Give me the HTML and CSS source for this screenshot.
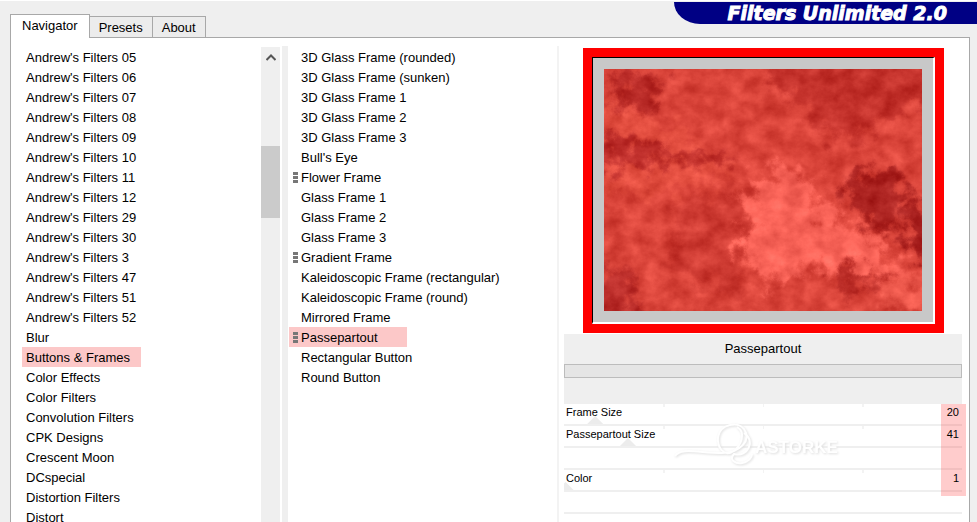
FILE: index.html
```
<!DOCTYPE html>
<html lang="en">
<head>
    <meta charset="UTF-8">
    <meta name="viewport" content="width=device-width, initial-scale=1.0">
    <title>Filters Unlimited 2.0</title>
    <link rel="stylesheet" href="styles.css">
</head>
<body>
    <header class="topbar">
        <div class="tabs" role="tablist">
            <button class="tab active" role="tab" aria-selected="true">Navigator</button>
            <button class="tab" role="tab" aria-selected="false">Presets</button>
            <button class="tab" role="tab" aria-selected="false">About</button>
        </div>
        <h1 class="brand">Filters Unlimited 2.0</h1>
    </header>

    <main class="panel">
        <section class="categories">
            <ul class="list">
                <li><button class="item">Andrew's Filters 05</button></li>
                <li><button class="item">Andrew's Filters 06</button></li>
                <li><button class="item">Andrew's Filters 07</button></li>
                <li><button class="item">Andrew's Filters 08</button></li>
                <li><button class="item">Andrew's Filters 09</button></li>
                <li><button class="item">Andrew's Filters 10</button></li>
                <li><button class="item">Andrew's Filters 11</button></li>
                <li><button class="item">Andrew's Filters 12</button></li>
                <li><button class="item">Andrew's Filters 29</button></li>
                <li><button class="item">Andrew's Filters 30</button></li>
                <li><button class="item">Andrew's Filters 3</button></li>
                <li><button class="item">Andrew's Filters 47</button></li>
                <li><button class="item">Andrew's Filters 51</button></li>
                <li><button class="item">Andrew's Filters 52</button></li>
                <li><button class="item">Blur</button></li>
                <li><button class="item selected">Buttons &amp; Frames</button></li>
                <li><button class="item">Color Effects</button></li>
                <li><button class="item">Color Filters</button></li>
                <li><button class="item">Convolution Filters</button></li>
                <li><button class="item">CPK Designs</button></li>
                <li><button class="item">Crescent Moon</button></li>
                <li><button class="item">DCspecial</button></li>
                <li><button class="item">Distortion Filters</button></li>
                <li><button class="item">Distort</button></li>
            </ul>
            <div class="scrollbar">
                <button class="scroll-up" aria-label="Scroll up">
                    <svg width="10" height="8" viewBox="0 0 10 8"><path d="M0.500 7L5 2.500L9.500 7" fill="none" stroke="#555" stroke-width="2"/></svg>
                </button>
                <div class="scroll-thumb"></div>
            </div>
        </section>

        <div class="divider"></div>

        <section class="filters">
            <ul class="list">
                <li><button class="item">3D Glass Frame (rounded)</button></li>
                <li><button class="item">3D Glass Frame (sunken)</button></li>
                <li><button class="item">3D Glass Frame 1</button></li>
                <li><button class="item">3D Glass Frame 2</button></li>
                <li><button class="item">3D Glass Frame 3</button></li>
                <li><button class="item">Bull's Eye</button></li>
                <li><button class="item marked">Flower Frame</button></li>
                <li><button class="item">Glass Frame 1</button></li>
                <li><button class="item">Glass Frame 2</button></li>
                <li><button class="item">Glass Frame 3</button></li>
                <li><button class="item marked">Gradient Frame</button></li>
                <li><button class="item">Kaleidoscopic Frame (rectangular)</button></li>
                <li><button class="item">Kaleidoscopic Frame (round)</button></li>
                <li><button class="item">Mirrored Frame</button></li>
                <li><button class="item marked selected">Passepartout</button></li>
                <li><button class="item">Rectangular Button</button></li>
                <li><button class="item">Round Button</button></li>
            </ul>
        </section>

        <section class="detail">
            <div class="preview">
                <div class="mat">
                    <svg class="texture" viewBox="0 0 318 242" preserveAspectRatio="none">
                        <defs>
                            <filter id="rust" x="-60" y="-60" width="440" height="360" filterUnits="userSpaceOnUse" color-interpolation-filters="sRGB">
                                <feTurbulence type="fractalNoise" baseFrequency="0.06" numOctaves="5" seed="8" result="warp"/>
                                <feGaussianBlur in="SourceGraphic" stdDeviation="4" result="soft"/>
                                <feDisplacementMap in="soft" in2="warp" scale="50" xChannelSelector="R" yChannelSelector="G" result="shapes"/>
                                <feTurbulence type="fractalNoise" baseFrequency="0.05 0.06" numOctaves="6" seed="14"/>
                                <feColorMatrix values="0.26 0 0 0 0.03  0.24 0 0 0 0.04  0.22 0 0 0 0.06  0 0 0 0 1" result="grain"/>
                                <feComposite in="shapes" in2="grain" operator="arithmetic" k1="0" k2="1" k3="1" k4="-0.165"/>
                            </filter>
                        </defs>
                        <g filter="url(#rust)">
                            <rect x="-60" y="-60" width="440" height="360" fill="#da4538"/>
                            <path d="M-20 30L80 60L130 110L60 120L-20 130Z" fill="#e5503f"/>
                            <path d="M10 5L60 8L50 40L12 38Z" fill="#b82a24"/>
                            <path d="M160 -20L340 -20L330 30L240 75L170 20Z" fill="#c5332a"/>
                            <path d="M-20 68L35 70L60 85L130 80L120 92L50 96L-20 98Z" fill="#c0302a"/>
                            <path d="M80 130L140 120L138 230L60 200Z" fill="#cf3c31"/>
                            <path d="M150 105L200 100L222 145L270 165L300 205L250 205L210 195L165 215L140 190L142 130Z" fill="#fa6557"/>
                            <path d="M245 100L290 105L300 135L285 170L255 140L235 130Z" fill="#ad241f"/>
                            <path d="M300 140L340 130L340 200L305 190Z" fill="#a8201c"/>
                            <path d="M235 200L275 205L255 225L235 220Z" fill="#bc2e26"/>
                            <path d="M275 205L340 215L340 245L280 235Z" fill="#ee5a4b"/>
                            <path d="M-20 195L30 205L35 260L-20 260Z" fill="#be302a"/>
                        </g>
                    </svg>
                </div>
            </div>

            <div class="info">
                <h2 class="filter-name">Passepartout</h2>
                <div class="progress"></div>
            </div>

            <div class="params">
                <div class="param ticks">
                    <label for="frameSize">Frame Size</label>
                    <output for="frameSize">20</output>
                    <input type="range" id="frameSize" min="0" max="255" value="20">
                </div>
                <div class="param ticks">
                    <label for="matSize">Passepartout Size</label>
                    <output for="matSize">41</output>
                    <input type="range" id="matSize" min="0" max="255" value="41">
                </div>
                <div class="param"></div>
                <div class="param ticks">
                    <label for="color">Color</label>
                    <output for="color">1</output>
                    <input type="range" id="color" min="0" max="255" value="1">
                </div>
                <div class="param"></div>
                <div class="highlight"></div>
                <svg class="watermark" width="180" height="48" viewBox="0 0 180 48">
                    <g fill="none" stroke="#fff" stroke-width="2">
                        <path d="M3 34C8 25 28 31 50 31C68 31 80 18 72 7C66 -1 48 2 46 15C45 26 52 34 60 30C70 24 74 10 65 5"/>
                        <path d="M72 11C84 18 76 36 62 32C56 38 64 42 70 41C76 40 80 36 80 32"/>
                    </g>
                    <text x="83" y="31">ASTORKE</text>
                </svg>
            </div>
        </section>
    </main>
</body>
</html>
```
FILE: styles.css
```
* {
    box-sizing: border-box;
}
body {
    margin: 0;
    height: 100vh;
    overflow: hidden;
    display: flex;
    flex-direction: column;
    background-color: #efefef;
    border-top: 1px solid #fff;
    font-family: "Liberation Sans", Arial, sans-serif;
    font-size: 13px;
    color: #000;
}
button {
    font: inherit;
    color: inherit;
    border: none;
    background: none;
    padding: 0;
}

.topbar {
    display: flex;
    justify-content: space-between;
    align-items: flex-start;
    height: 36px;
    padding-left: 10px;
}
.tabs {
    display: flex;
    align-items: flex-end;
    align-self: flex-end;
}
.tab {
    height: 21px;
    padding: 0 9px;
    border: 1px solid #a8a8a8;
    border-left: none;
    border-bottom: none;
    background-color: #ececec;
}
.tab.active {
    position: relative;
    height: 24px;
    padding: 0 11px 3px;
    margin-bottom: -1px;
    border-left: 1px solid #a8a8a8;
    background-color: #fff;
}
.brand {
    margin: 1px 0 0;
    height: 22px;
    padding: 0 30px 0 54px;
    border-bottom-left-radius: 26px 22px;
    background-color: #000084;
    color: #fff;
    font-family: "DejaVu Sans", Verdana, sans-serif;
    font-size: 19px;
    font-style: italic;
    font-weight: bold;
    line-height: 23px;
    -webkit-text-stroke: 1px #fff;
}

.panel {
    flex: 1;
    min-height: 0;
    display: grid;
    grid-template-columns: 271fr 6px 269fr 412fr;
    margin: 0 7px 0 10px;
    border: 1px solid #a8a8a8;
    border-bottom: none;
    background-color: #fff;
    overflow: hidden;
}
.categories {
    display: flex;
    justify-content: space-between;
    min-height: 0;
    padding: 9px 2px 0 11px;
}
.filters {
    min-height: 0;
    padding: 9px 0 0 1px;
}
.divider {
    margin-top: 8px;
    background-color: #efefef;
}
.list {
    list-style: none;
    margin: 0;
    padding: 0;
}
.list li {
    height: 20px;
}
.item {
    display: flex;
    align-items: center;
    height: 20px;
    padding: 1px 11px 0 4px;
    line-height: 19px;
    white-space: nowrap;
}
.filters .item {
    padding: 1px 29px 0 12px;
}
.selected {
    background-color: #fcc8c8;
}
/* three stacked bars in front of the name */
.filters .marked {
    padding-left: 4px;
}
.marked::before {
    content: "";
    width: 5px;
    height: 11px;
    margin-right: 3px;
    background: repeating-linear-gradient(#777 0 3px, transparent 3px 4px);
}

.scrollbar {
    width: 19px;
    background-color: #efefef;
}
.scroll-up {
    display: flex;
    align-items: center;
    justify-content: center;
    width: 100%;
    height: 20px;
}
.scroll-thumb {
    margin-top: 79px;
    height: 72px;
    background-color: #cbcbcb;
}

.detail {
    margin-top: 8px;
    padding: 2px 7px 0 5px;
    border-left: 2px solid #f3f3f3;
}
.preview {
    margin: 0 18px 1px 19px;
    border: 9px solid #f00;
}
.mat {
    padding: 11px;
    border: solid #fff;
    border-width: 1px 2px 2px 1px;
    border-top-color: #000;
    border-left-color: #000;
    background-color: #c8c8c8;
}
.texture {
    display: block;
    width: 100%;
    height: 242px;
    overflow: hidden;
}
.info {
    height: 70px;
    background-color: #efefef;
}
.filter-name {
    margin: 0;
    font-size: 13px;
    font-weight: normal;
    line-height: 30px;
    text-align: center;
}
.progress {
    height: 14px;
    border: 1px solid #bcbcbc;
    background-color: #e5e5e5;
}

.params {
    position: relative;
    font-size: 11px;
}
.param {
    display: flex;
    flex-wrap: wrap;
    justify-content: space-between;
    height: 22px;
    padding: 0 3px 0 2px;
    border-bottom: 2px solid #efefef;
    line-height: 16px;
    overflow: hidden;
}
.ticks {
    background: linear-gradient(90deg, transparent 25%, #f3f3f3 25% 25.3%, transparent 25.3% 50%, #f3f3f3 50% 50.3%, transparent 50.3% 75%, #f3f3f3 75% 75.3%, transparent 75.3%) 0 0 / 100% 3px no-repeat;
}
.param label,
.param output {
    z-index: 1;
}
.param input {
    appearance: none;
    flex: 0 0 calc(100% + 21px);
    height: 8px;
    margin: -4px -11px 0 -10px;
    background: none;
}
.param input::-webkit-slider-thumb {
    appearance: none;
    width: 16px;
    height: 8px;
    background-color: #ececec;
    clip-path: polygon(50% 0, 100% 100%, 0 100%);
}
.highlight {
    position: absolute;
    top: 0;
    right: -4px;
    width: 25px;
    height: 92px;
    background-color: rgba(255, 0, 0, 0.2);
    pointer-events: none;
}
.watermark {
    position: absolute;
    top: 18px;
    left: 108px;
    filter: drop-shadow(1px 1px 1px #ddd);
    pointer-events: none;
}
.watermark text {
    fill: #fff;
    font-family: "Liberation Sans", Arial, sans-serif;
    font-size: 17px;
    font-weight: bold;
}
```
